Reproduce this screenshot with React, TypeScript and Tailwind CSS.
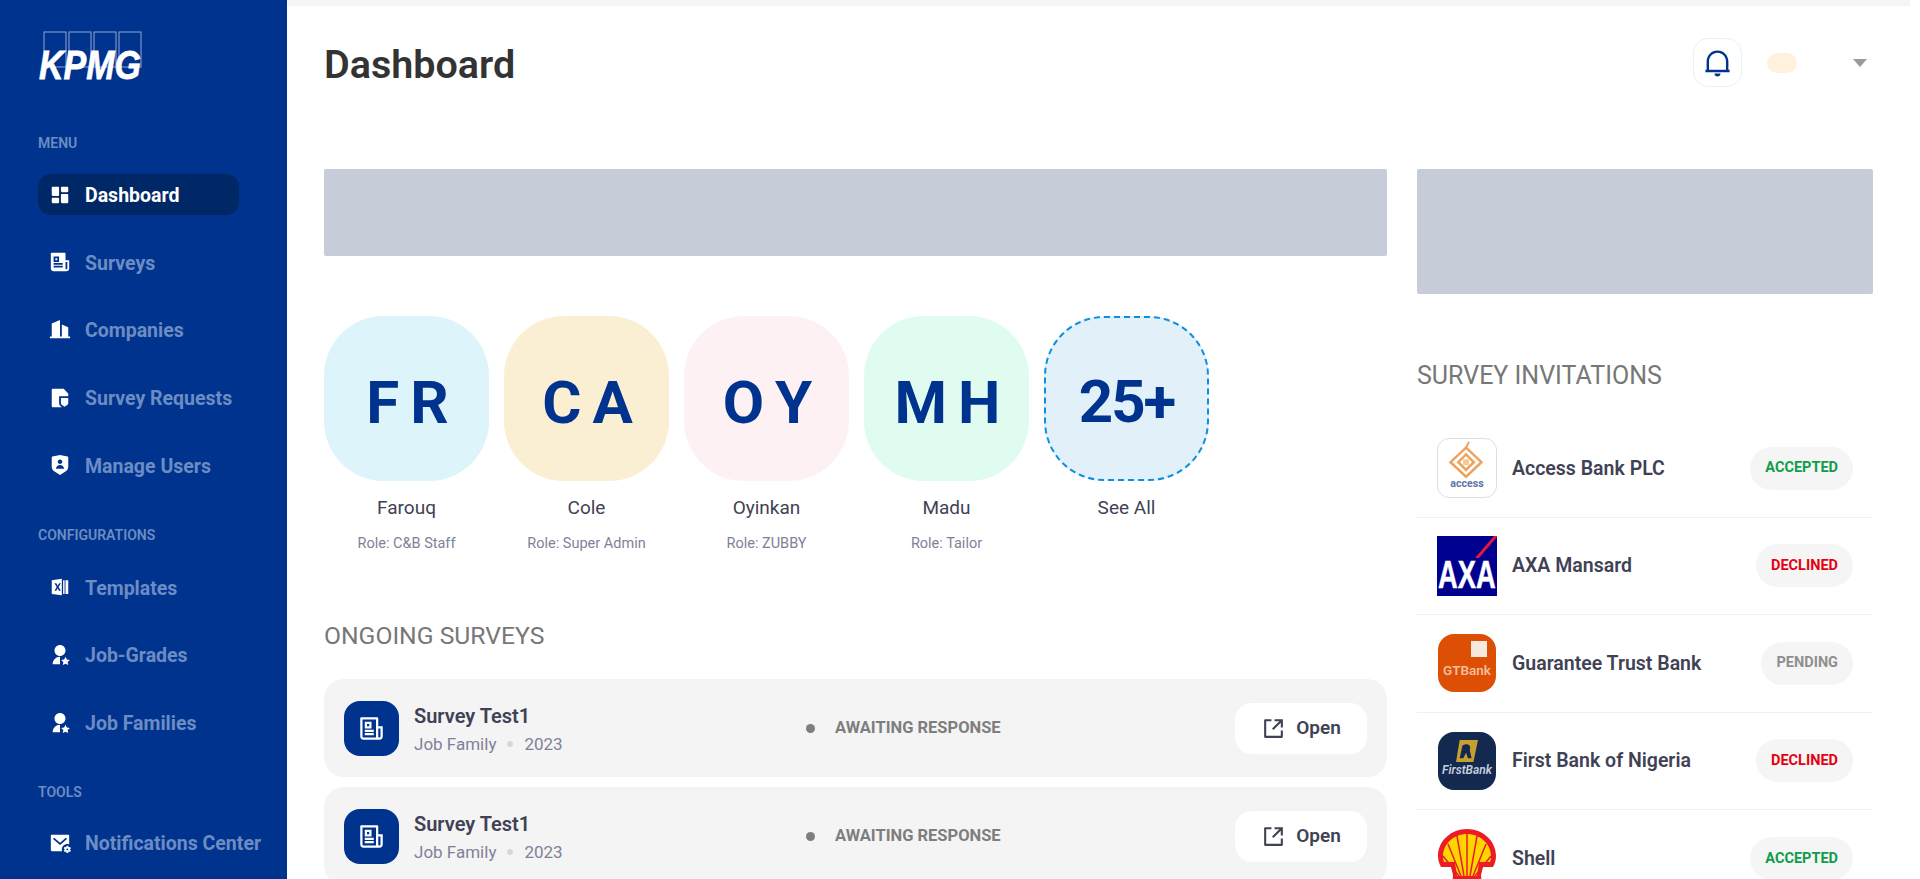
import { ReactNode } from 'react'
import {
  RiDashboardFill,
  RiNewspaperFill,
  RiBuilding2Fill,
  RiFileShield2Fill,
  RiShieldUserFill,
  RiUserStarFill,
  RiMailSettingsFill,
  RiNotification2Line,
  RiShareBoxLine,
  RiNewspaperLine,
} from 'react-icons/ri'

const font = { fontFamily: '"Roboto", "Liberation Sans", sans-serif' }

const ExcelIcon = ({ className }: { className?: string }) => (
  <svg viewBox="0 0 24 24" className={className} fill="currentColor">
    <path fillRule="evenodd" d="M3 4.5 14 3v18L3 19.5v-15Zm3 3.5 2.4 4L6 16h1.9l1.5-2.6 1.5 2.6H13l-2.5-4L13 8h-2l-1.5 2.5L8 8H6Z" />
    <path d="M15.4 4.5H17v15h-1.600zM18 4.500h3v15h-3z" />
  </svg>
)

const NavItem = ({ icon, label, active }: { icon: ReactNode; label: string; active?: boolean }) => (
  <div className={`flex items-center h-[41px] w-[201px] rounded-[13px] pl-[11px] whitespace-nowrap text-[19.5px] font-bold ${active ? 'bg-[#002766] text-white' : 'text-[#6b8dc4]'}`}>
    <span className="w-[36px] shrink-0 text-white">{icon}</span>
    <span className="pt-[2px]">{label}</span>
  </div>
)

const Heading = ({ children, className }: { children: ReactNode; className?: string }) => (
  <div className={`text-[14px] font-semibold text-[#6b8dc4] leading-[17px] ${className}`}>{children}</div>
)

const Sidebar = () => {
  const ic = 'w-[22px] h-[22px]'
  return (
    <div className="w-[287px] shrink-0 h-full bg-[#00338d] pl-[38px] overflow-hidden">
      <svg viewBox="0 0 106 62" className="w-[106px] h-[62px] mt-[31px]">
        <g fill="none" stroke="#8fa6d2" strokeWidth="1">
          <rect x="6" y="1" width="22" height="35" />
          <rect x="31" y="1" width="22" height="35" />
          <rect x="56" y="1" width="22" height="35" />
          <rect x="81" y="1" width="22" height="35" />
        </g>
        <text transform="translate(1 48) scale(.83 1)" fill="#fff" stroke="#fff" strokeWidth="0.8" fontSize="41" fontWeight="700" fontStyle="italic" fontFamily="Liberation Sans">KPMG</text>
      </svg>
      <Heading className="mt-[42px]">MENU</Heading>
      <div className="mt-[22px] flex flex-col gap-[26.7px]">
        <NavItem active label="Dashboard" icon={<RiDashboardFill className={ic} />} />
        <NavItem label="Surveys" icon={<RiNewspaperFill className={ic} />} />
        <NavItem label="Companies" icon={<RiBuilding2Fill className={ic} />} />
        <NavItem label="Survey Requests" icon={<RiFileShield2Fill className={ic} />} />
        <NavItem label="Manage Users" icon={<RiShieldUserFill className={ic} />} />
      </div>
      <Heading className="mt-[41px]">CONFIGURATIONS</Heading>
      <div className="mt-[23px] flex flex-col gap-[26.7px]">
        <NavItem label="Templates" icon={<ExcelIcon className={ic} />} />
        <NavItem label="Job-Grades" icon={<RiUserStarFill className={ic} />} />
        <NavItem label="Job Families" icon={<RiUserStarFill className={ic} />} />
      </div>
      <Heading className="mt-[41px]">TOOLS</Heading>
      <div className="mt-[21px]">
        <NavItem label="Notifications Center" icon={<RiMailSettingsFill className={ic} />} />
      </div>
    </div>
  )
}

const people = [
  { initials: 'F R', name: 'Farouq', role: 'Role: C&B Staff', bg: 'bg-[#dcf4fa]' },
  { initials: 'C A', name: 'Cole', role: 'Role: Super Admin', bg: 'bg-[#fbefd3]' },
  { initials: 'O Y', name: 'Oyinkan', role: 'Role: ZUBBY', bg: 'bg-[#fef1f4]' },
  { initials: 'M H', name: 'Madu', role: 'Role: Tailor', bg: 'bg-[#e0fcf1]' },
]

const Person = ({ initials, name, role, bg }: { initials: string; name: string; role: string; bg: string }) => (
  <div className="w-[165px] flex flex-col items-center">
    <div className={`w-[165px] h-[165px] rounded-[60px] flex items-center justify-center pt-[8px] text-[60px] tracking-[-2px] font-bold text-[#00338d] ${bg}`}>{initials}</div>
    <div className="mt-[15px] text-[19px] leading-[24px] text-[#3f4254]">{name}</div>
    <div className="mt-[15px] text-[14.5px] leading-[18px] text-[#7e8299]">{role}</div>
  </div>
)

const SurveyCard = () => (
  <div className="h-[98px] rounded-[20px] bg-[#f4f4f4] flex items-center pl-[20px] pr-[20px] shrink-0">
    <div className="w-[55px] h-[55px] rounded-[16px] bg-[#00338d] flex items-center justify-center text-white">
      <RiNewspaperLine className="w-[27px] h-[27px]" />
    </div>
    <div className="ml-[15px] w-[390px]">
      <div className="text-[20px] leading-[26px] font-semibold text-[#3f4254]">Survey Test1</div>
      <div className="mt-[5px] flex items-center text-[17px] leading-[20px] text-[#7e8299]">
        Job Family
        <span className="w-[6px] h-[6px] rounded-full bg-[#d8d8d8] mx-[11px]" />
        2023
      </div>
    </div>
    <span className="w-[9px] h-[9px] rounded-full bg-[#7e7e7e] ml-[2px]" />
    <div className="ml-[20px] text-[16.5px] font-bold text-[#7e7e7e] whitespace-nowrap">AWAITING RESPONSE</div>
    <div className="ml-auto w-[132px] h-[51px] rounded-[17px] bg-white flex items-center justify-center gap-[10px] text-[19px] font-semibold text-[#3f4254]">
      <RiShareBoxLine className="w-[25px] h-[25px]" />
      Open
    </div>
  </div>
)

const AccessLogo = () => (
  <div className="w-[60px] h-[60px] rounded-[12px] border border-[#dddddd] bg-white">
    <svg viewBox="0 0 60 60" className="w-full h-full">
      <g fill="none" stroke="#eda35d" strokeWidth="2.6">
        <path d="M29 9 45 24 29 39 13 24Z" />
        <path d="M29 16 37 24 29 32 21 24Z" />
      </g>
      <path d="M26 21h6v6h-6z" fill="#f6c896" />
      <path d="M29 9 32 3" stroke="#eda35d" strokeWidth="2" />
      <text x="30" y="50" textAnchor="middle" fontSize="11" fontWeight="700" fill="#5c74a8" fontFamily="Roboto">access</text>
    </svg>
  </div>
)

const AxaLogo = () => (
  <svg viewBox="0 0 60 60" className="w-[60px] h-[60px]">
    <rect width="60" height="60" fill="#00008f" />
    <path d="M60 0v1L42 22h-4L57 0z" fill="#e5173f" />
    <text transform="translate(1 52) scale(.7 1)" fill="#fff" stroke="#fff" strokeWidth="0.5" fontSize="39" fontWeight="700" fontFamily="Liberation Sans">AXA</text>
  </svg>
)

const GtLogo = () => (
  <div className="w-[58px] h-[58px] mx-[1px] rounded-[16px] bg-[#dd4f05] relative overflow-hidden flex flex-col items-center">
    <div className="absolute right-[9px] top-[7px] w-[16px] h-[16px] bg-[#f7e9e0]" />
    <div className="mt-[26px] text-[13.5px] font-semibold text-[#f5bd9c] whitespace-nowrap">GTBank</div>
  </div>
)

const FirstLogo = () => (
  <div className="w-[58px] h-[58px] mx-[1px] rounded-[16px] bg-[#13294f] relative flex flex-col items-center overflow-hidden">
    <svg viewBox="0 0 24 26" className="w-[22px] h-[24px] mt-[7px] shrink-0">
      <path d="M4 1h20l-5 24H0Z" fill="#c5a030" />
      <path d="M7 7c5-3 10-1 8 5l2 9h-4l-2-6-3 6H4Z" fill="#13294f" />
    </svg>
    <div className="text-[12px] italic font-semibold leading-[14px] text-[#c6cedc] whitespace-nowrap">FirstBank</div>
  </div>
)

const ShellLogo = () => (
  <svg viewBox="0 0 60 60" className="w-[60px] h-[60px] shrink-0 self-start mt-[18px]">
    <path d="M30 1C14 1 1 13 1 28c0 4 1 7 3 11l10 0 2 8-1 13h30l-1-13 2-8 10 0c2-4 3-7 3-11C59 13 46 1 30 1Z" fill="#ed1c24" />
    <path d="M30 6C17 6 6 16 6 28c0 2 0 4 1 6l11 0 2 14h20l2-14 11 0c1-2 1-4 1-6C54 16 43 6 30 6Z" fill="#ffd500" />
    <g stroke="#ed1c24" strokeWidth="1.5" fill="none">
      <path d="M30 48V6M27 48 20 8M33 48l7-40M24 48 11 16M36 48l13-32M22 48 6 28M38 48l16-20" />
    </g>
  </svg>
)

const statusStyle: Record<string, string> = {
  ACCEPTED: 'text-[#0f9d4a]',
  DECLINED: 'text-[#e60012]',
  PENDING: 'text-[#8f8f8f]',
}

const Invitation = ({ logo, name, status, last }: { logo: ReactNode; name: string; status: string; last?: boolean }) => (
  <div className={`h-[97.5px] shrink-0 flex items-center pl-[20px] pr-[20px] ${last ? '' : 'border-b border-[#e6f1f8]'}`}>
    {logo}
    <div className="ml-[15px] text-[19.5px] font-semibold text-[#3f4254] whitespace-nowrap">{name}</div>
    <div className={`ml-auto h-[43px] rounded-full bg-[#f5f5f5] px-[15px] flex items-center text-[14.5px] font-bold ${statusStyle[status]}`}>{status}</div>
  </div>
)

export default function App() {
  return (
    <div className="flex w-[1920px] h-[879px] overflow-hidden bg-white" style={font}>
      <Sidebar />
      <div className="flex-1 min-w-0 overflow-hidden">
        <div className="h-[6px] w-[1623px] bg-[#f5f5f5]" />
        <div className="flex items-center h-[118px] pl-[37px] pr-[40px]">
          <h1 className="text-[39.5px] font-semibold text-[#333333]">Dashboard</h1>
          <div className="ml-auto mb-[5px] flex items-center">
            <div className="w-[49px] h-[49px] rounded-[15px] border border-[#e3f1f9] flex items-center justify-center text-[#00338d]">
              <RiNotification2Line className="w-[29px] h-[29px]" />
            </div>
            <div className="ml-[25px] w-[30px] h-[20px] rounded-[10px] bg-[#fff1dd]" />
            <svg viewBox="0 0 14 8" className="ml-[56px] w-[14px] h-[8px]"><path d="M0 0h14L7 8Z" fill="#9a9a9a" /></svg>
            <span className="w-[13px]" />
          </div>
        </div>
        <div className="flex pl-[37px] pr-[47px] mt-[45px] gap-[30px]">
          <div className="w-[1063px] shrink-0">
            <div className="h-[87px] bg-[#c6cdd9] rounded-[2px]" />
            <div className="mt-[60px] flex gap-[15px]">
              {people.map((p) => <Person key={p.name} {...p} />)}
              <div className="w-[165px] flex flex-col items-center">
                <div className="w-[165px] h-[165px] rounded-[60px] border-2 border-dashed border-[#0d8fe0] bg-[#e2f1f9] flex items-center justify-center pt-[6px] text-[60px] tracking-[-2px] font-bold text-[#00338d]">25+</div>
                <div className="mt-[15px] text-[19px] leading-[24px] text-[#3f4254]">See All</div>
              </div>
            </div>
            <div className="mt-[68px] text-[24.7px] leading-[30px] text-[#777777]">ONGOING SURVEYS</div>
            <div className="mt-[28px] flex flex-col gap-[10px]">
              <SurveyCard />
              <SurveyCard />
            </div>
          </div>
          <div className="w-[456px] shrink-0">
            <div className="h-[125px] bg-[#c6cdd9] rounded-[2px]" />
            <div className="mt-[67px] text-[25px] leading-[30px] text-[#777777]">SURVEY INVITATIONS</div>
            <div className="mt-[29px] flex flex-col">
              <Invitation logo={<AccessLogo />} name="Access Bank PLC" status="ACCEPTED" />
              <Invitation logo={<AxaLogo />} name="AXA Mansard" status="DECLINED" />
              <Invitation logo={<GtLogo />} name="Guarantee Trust Bank" status="PENDING" />
              <Invitation logo={<FirstLogo />} name="First Bank of Nigeria" status="DECLINED" />
              <Invitation logo={<ShellLogo />} name="Shell" status="ACCEPTED" last />
            </div>
          </div>
        </div>
      </div>
    </div>
  )
}
